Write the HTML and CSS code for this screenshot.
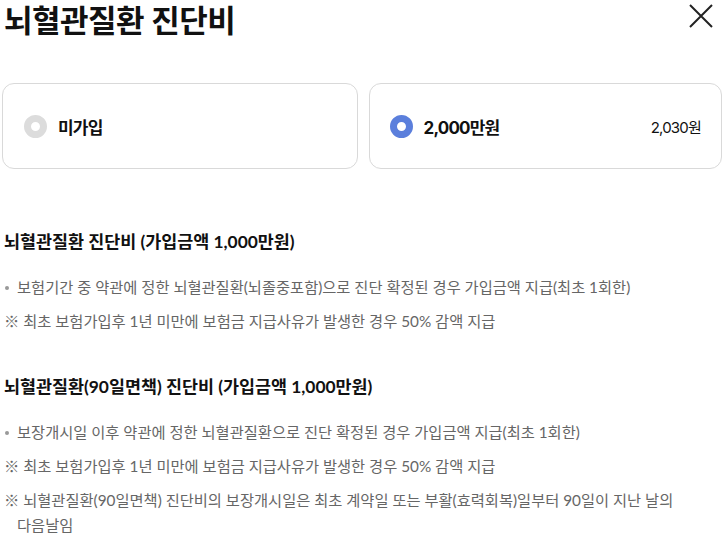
FILE: index.html
```html
<!DOCTYPE html>
<html lang="ko">
<head>
  <meta charset="utf-8" />
  <title>뇌혈관질환 진단비</title>
  <link rel="stylesheet" href="styles.css">
</head>
<body>
<div class="head">
  <h1>뇌혈관질환 진단비</h1>
  <a href="#" class="close" aria-label="닫기">
    <svg width="26" height="26" viewBox="0 0 26 26"><path d="M2 2L24 24M24 2L2 24" stroke="#222" stroke-width="2" fill="none"/></svg>
  </a>
</div>
<div class="opts">
  <label class="opt">
    <span class="radio"></span>
    <span class="name">미가입</span>
  </label>
  <label class="opt on">
    <span class="radio"></span>
    <span class="name">2,000만원</span>
    <span class="price">2,030원</span>
  </label>
</div>
<div class="sec">
  <h2>뇌혈관질환 진단비 (가입금액 1,000만원)</h2>
  <ul>
    <li class="dot">보험기간 중 약관에 정한 뇌혈관질환(뇌졸중포함)으로 진단 확정된 경우 가입금액 지급(최초 1회한)</li>
    <li class="note">최초 보험가입후 1년 미만에 보험금 지급사유가 발생한 경우 50% 감액 지급</li>
  </ul>
</div>
<div class="sec">
  <h2>뇌혈관질환(90일면책) 진단비 (가입금액 1,000만원)</h2>
  <ul>
    <li class="dot">보장개시일 이후 약관에 정한 뇌혈관질환으로 진단 확정된 경우 가입금액 지급(최초 1회한)</li>
    <li class="note">최초 보험가입후 1년 미만에 보험금 지급사유가 발생한 경우 50% 감액 지급</li>
    <li class="note">뇌혈관질환(90일면책) 진단비의 보장개시일은 최초 계약일 또는 부활(효력회복)일부터 90일이 지난 날의 다음날임</li>
  </ul>
</div>
</body>
</html>
```

FILE: styles.css
```css
*{margin:0;padding:0;box-sizing:border-box;}
body{width:724px;padding:0 2px;font-family:Lato,"Noto Sans CJK KR",sans-serif;color:#111;background:#fff;}
ul{list-style:none;}
.head{display:flex;justify-content:space-between;align-items:flex-start;padding:0 2px;}
.head h1{font-family:Lato,"Noto Sans CJK KR",sans-serif;font-size:31px;font-weight:700;line-height:42px;letter-spacing:-0.5px;margin-top:-1px;}
.close{display:block;margin:3px 6px 0 0;}
.opts{display:flex;gap:11px;margin-top:42px;}
.opt{flex:1;height:86px;border:1px solid #d9d9d9;border-radius:12px;display:flex;align-items:center;padding:0 21px;}
.opt.on{padding:0 20px 0 20px;}
.radio{width:23px;height:23px;border-radius:50%;border:7.5px solid #dcdcdc;background:#fff;flex:none;}
.opt.on .radio{border-color:#5b7fdc;}
.name{font-family:Inter,"Noto Sans CJK KR",sans-serif;font-size:17px;font-weight:700;letter-spacing:-0.8px;margin-left:11px;flex:1;}
.price{font-family:Inter,"Noto Sans CJK KR",sans-serif;font-size:15px;letter-spacing:-0.8px;}
.sec{padding:0 2px;}
.sec h2{font-size:17.4px;font-weight:700;line-height:24px;margin-top:61px;}
.sec + .sec h2{margin-top:41px;}
.sec ul{margin-top:21px;}
.sec li{position:relative;font-size:15.3px;line-height:25px;color:#666;padding-left:13px;margin-bottom:9px;word-break:keep-all;}
.sec li.dot:before{content:"";position:absolute;left:1px;top:11px;width:4px;height:4px;border-radius:50%;background:#999;}
.sec li.note{text-indent:-13px;}
.sec li.note:before{content:"※ ";}
```
